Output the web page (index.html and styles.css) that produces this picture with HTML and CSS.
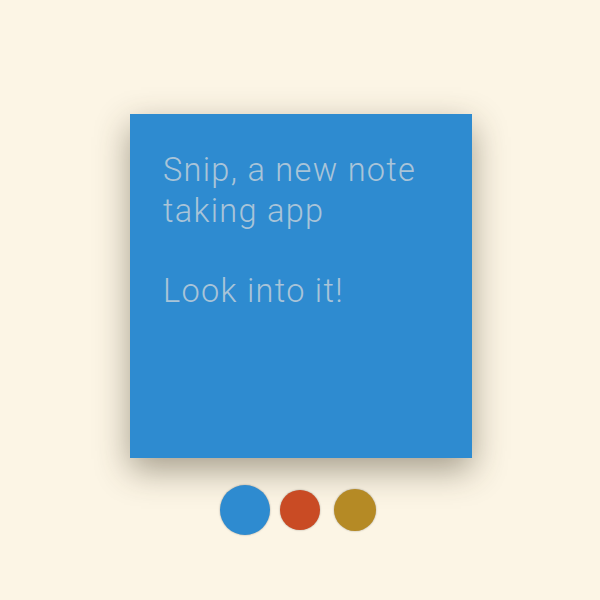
FILE: index.html
```html
<!DOCTYPE html>
<html>
<head>
<meta charset="utf-8">
<link rel="stylesheet" href="styles.css">
</head>
<body>
<div class="page">
  <div class="note">
    <p>Snip, a new note taking app</p>
    <p class="gap">Look into it!</p>
  </div>
  <div class="swatches">
    <span class="dot blue selected"></span>
    <span class="dot red"></span>
    <span class="dot gold"></span>
  </div>
</div>
</body>
</html>
```
FILE: styles.css
```css
html, body {
  margin: 0;
  padding: 0;
  background: #fcf5e5;
}
.page {
  width: 600px;
  height: 600px;
  display: flex;
  flex-direction: column;
  align-items: center;
  padding-top: 114px;
  box-sizing: border-box;
}
.note {
  width: 342px;
  height: 344px;
  margin-left: 2px;
  box-sizing: border-box;
  background: #2e8bd0;
  padding: 36px 10px 0 33px;
  box-shadow: 0 12px 32px rgba(60, 50, 30, 0.45);
  color: #a9c4d8;
  font-family: Roboto, "Liberation Sans", sans-serif;
  font-weight: 300;
  font-size: 32.5px;
  line-height: 41px;
  letter-spacing: 1.3px;
}
.note p {
  margin: 0;
}
.note .gap {
  margin-top: 39px;
}
.swatches {
  display: flex;
  align-items: center;
  gap: 10px;
  margin-top: 27px;
  margin-right: 4px;
}
.dot {
  display: block;
  border-radius: 50%;
  box-shadow: 0 0 2px rgba(0,0,0,0.35);
}
.blue { background: #2e8bd0; width: 50px; height: 50px; }
.red { background: #c94b24; width: 40px; height: 40px; }
.gold { background: #b58a25; width: 42px; height: 42px; margin-left: 4px; }
```
